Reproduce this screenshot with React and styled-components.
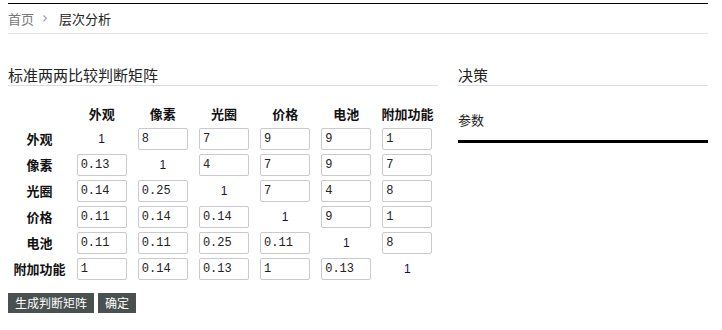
import React from "react";
import styled, { createGlobalStyle } from "styled-components";

const Global = createGlobalStyle`
  html, body { margin: 0; padding: 0; background: #fff; }
  body { font-family: "Noto Sans CJK SC", "Liberation Sans", sans-serif; color: #333; }
`;

const Page = styled.div`
  width: 700px;
  padding: 3px 14px 0 8px;
`;

const Breadcrumb = styled.div`
  border-top: 1px solid #000;
  border-bottom: 1px solid #e2e2e2;
  height: 29px;
  display: flex;
  align-items: center;
  font-size: 13px;
`;

const Crumb = styled.span`
  color: ${(p) => (p.$current ? "#222" : "#777")};
`;

const Sep = styled.span`
  color: #999;
  font-family: "DejaVu Sans", sans-serif;
  font-size: 15px;
  line-height: 15px;
  margin: 0 11px 0 8px;
`;

const Main = styled.div`
  display: flex;
  gap: 20px;
  margin-top: 31px;
  align-items: flex-start;
`;

const Panel = styled.div`
  width: ${(p) => p.$w}px;
  display: flex;
  flex-direction: column;
`;

const Title = styled.div`
  font-size: 15px;
  line-height: 20px;
  height: 20px;
  color: #222;
  border-bottom: 1px solid #ddd;
`;

const Table = styled.table`
  border-collapse: collapse;
  margin-top: 16px;
  table-layout: fixed;
`;

const Row = styled.tr`
  height: ${(p) => (p.$head ? 24 : 26)}px;
`;

const Th = styled.th`
  width: ${(p) => p.$w || 61}px;
  padding: 0;
  font-size: 13px;
  line-height: 18px;
  font-weight: bold;
  color: #111;
  text-align: center;
  vertical-align: middle;
`;

const Td = styled.td`
  padding: 0;
  text-align: center;
  vertical-align: middle;
`;

const Cell = styled.input`
  box-sizing: border-box;
  width: 50px;
  height: 22px;
  margin: 0 0 0 5.5px;
  display: block;
  border: 1px solid #c9c9cf;
  border-radius: 2px;
  padding: 0 0 0 3px;
  font-family: "Liberation Mono", "DejaVu Sans Mono", monospace;
  font-size: 12px;
  color: #222;
  background: #fff;
  outline: none;
`;

const One = styled.div`
  font-family: "Liberation Sans", Arial, sans-serif;
  font-size: 12px;
  line-height: 22px;
  color: #1a0f3a;
`;

const Buttons = styled.div`
  display: flex;
  gap: 4px;
  margin-top: 11px;
`;

const Button = styled.button`
  height: 20px;
  padding: 0 7px;
  border: none;
  border-radius: 0;
  background: #4a5050;
  color: #fff;
  font-family: "Noto Sans CJK SC", sans-serif;
  font-size: 12px;
  line-height: 20px;
  cursor: pointer;
`;

const Param = styled.div`
  margin-top: 24px;
  font-size: 13px;
  line-height: 20px;
  color: #222;
`;

const ThickRule = styled.div`
  margin-top: 10px;
  height: 3px;
  background: #000;
`;

const labels = ["外观", "像素", "光圈", "价格", "电池", "附加功能"];
const matrix = [
  ["1", "8", "7", "9", "9", "1"],
  ["0.13", "1", "4", "7", "9", "7"],
  ["0.14", "0.25", "1", "7", "4", "8"],
  ["0.11", "0.14", "0.14", "1", "9", "1"],
  ["0.11", "0.11", "0.25", "0.11", "1", "8"],
  ["1", "0.14", "0.13", "1", "0.13", "1"],
];

export default function App() {
  return (
    <>
      <Global />
      <Page>
        <Breadcrumb>
          <Crumb>首页</Crumb>
          <Sep>›</Sep>
          <Crumb $current>层次分析</Crumb>
        </Breadcrumb>
        <Main>
          <Panel $w={430}>
            <Title>标准两两比较判断矩阵</Title>
            <Table>
              <thead>
                <Row $head>
                  <Th $w={63}></Th>
                  {labels.map((l) => (
                    <Th key={l}>{l}</Th>
                  ))}
                </Row>
              </thead>
              <tbody>
                {matrix.map((row, i) => (
                  <Row key={i}>
                    <Th $w={63}>{labels[i]}</Th>
                    {row.map((v, j) => (
                      <Td key={j}>
                        {i === j ? <One>{v}</One> : <Cell defaultValue={v} />}
                      </Td>
                    ))}
                  </Row>
                ))}
              </tbody>
            </Table>
            <Buttons>
              <Button>生成判断矩阵</Button>
              <Button>确定</Button>
            </Buttons>
          </Panel>
          <Panel $w={250}>
            <Title>决策</Title>
            <Param>参数</Param>
            <ThickRule />
          </Panel>
        </Main>
      </Page>
    </>
  );
}
